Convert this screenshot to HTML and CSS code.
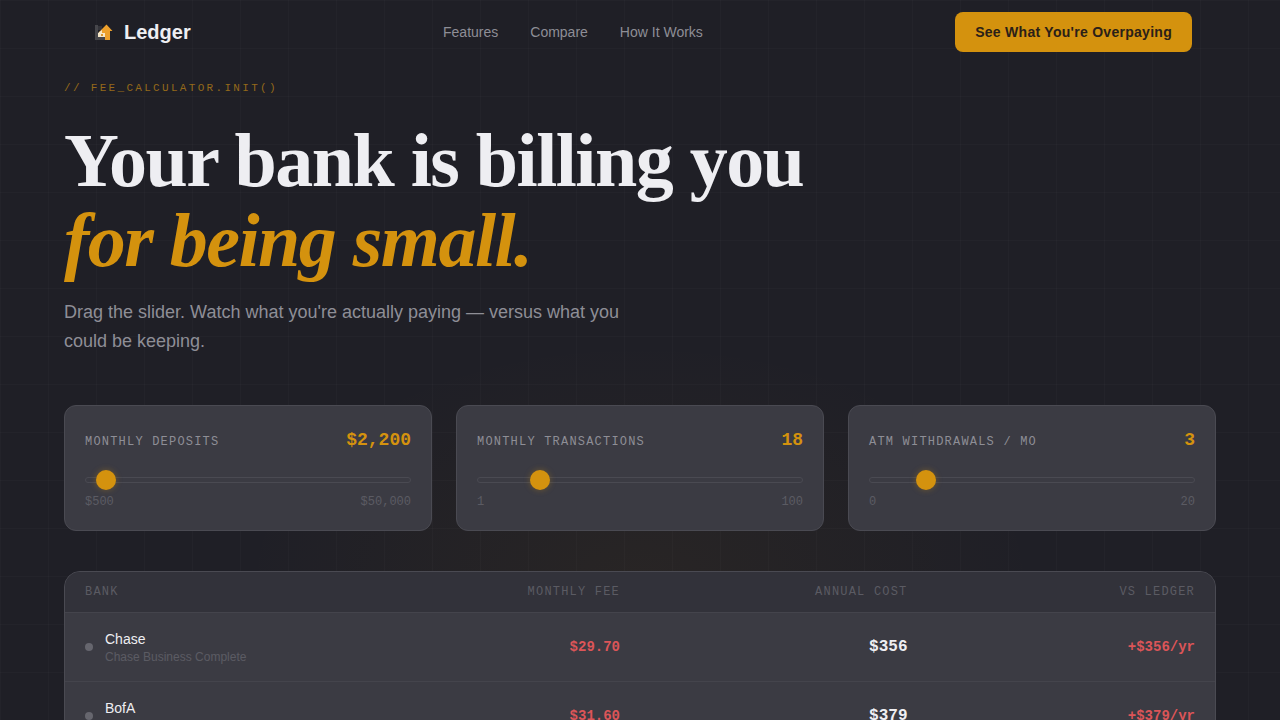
FILE: index.html
```html
<!DOCTYPE html>
<html lang="en">
<head>
    <meta charset="UTF-8">
    <meta name="viewport" content="width=device-width, initial-scale=1.0">
    <title>Ledger</title>
    <link rel="stylesheet" href="styles.css">
</head>
<body>
    <header class="nav">
        <a class="logo" href="#">
            <svg class="logo-icon" viewBox="0 0 28 28" aria-hidden="true">
                <path d="M7 7h3v12h7v3H7z" fill="#46464b"/>
                <path d="M10 8h4v4h-4z" fill="#34343a"/>
                <path d="M18.500 6.500L24.500 13H22v9h-5v-4h-6v-4z" fill="#eda02c"/>
                <path d="M10 15l4-3v3h3v4h-7z" fill="#f5e6c8"/>
                <path d="M13 16h2v2h-2z" fill="#d9962f"/>
            </svg>
            Ledger
        </a>
        <nav class="nav-links">
            <a href="#features">Features</a>
            <a href="#compare">Compare</a>
            <a href="#how">How It Works</a>
        </nav>
        <button class="nav-cta" type="button">See What You're Overpaying</button>
    </header>

    <main class="page">
        <p class="eyebrow">// FEE_CALCULATOR.INIT()</p>
        <h1>Your bank is billing you<br><em>for being small.</em></h1>
        <p class="intro">Drag the slider. Watch what you're actually paying — versus what you could be keeping.</p>

        <form class="sliders">
            <div class="card">
                <div class="card-head">
                    <label for="deposits">MONTHLY DEPOSITS</label>
                    <output for="deposits" id="depositsValue">$2,200</output>
                </div>
                <input type="range" id="deposits" min="500" max="50000" step="100" value="2200">
                <div class="range-ends"><span>$500</span><span>$50,000</span></div>
            </div>
            <div class="card">
                <div class="card-head">
                    <label for="transactions">MONTHLY TRANSACTIONS</label>
                    <output for="transactions" id="transactionsValue">18</output>
                </div>
                <input type="range" id="transactions" min="1" max="100" value="18">
                <div class="range-ends"><span>1</span><span>100</span></div>
            </div>
            <div class="card">
                <div class="card-head">
                    <label for="atm">ATM WITHDRAWALS / MO</label>
                    <output for="atm" id="atmValue">3</output>
                </div>
                <input type="range" id="atm" min="0" max="20" value="3">
                <div class="range-ends"><span>0</span><span>20</span></div>
            </div>
        </form>

        <div class="table-wrap" id="compare">
            <table>
                <thead>
                    <tr>
                        <th>BANK</th>
                        <th>MONTHLY FEE</th>
                        <th>ANNUAL COST</th>
                        <th>VS LEDGER</th>
                    </tr>
                </thead>
                <tbody>
                    <tr>
                        <td>
                            <div class="bank">
                                <span class="dot"></span>
                                <div>
                                    <div class="bank-name">Chase</div>
                                    <div class="bank-plan">Chase Business Complete</div>
                                </div>
                            </div>
                        </td>
                        <td class="fee">$29.70</td>
                        <td class="annual">$356</td>
                        <td class="fee">+$356/yr</td>
                    </tr>
                    <tr>
                        <td>
                            <div class="bank">
                                <span class="dot"></span>
                                <div>
                                    <div class="bank-name">BofA</div>
                                    <div class="bank-plan">Business Advantage</div>
                                </div>
                            </div>
                        </td>
                        <td class="fee">$31.60</td>
                        <td class="annual">$379</td>
                        <td class="fee">+$379/yr</td>
                    </tr>
                </tbody>
            </table>
        </div>
    </main>

    <script>
        // Keep the number beside each slider in step with it
        function bindSlider(id, prefix) {
            const input = document.getElementById(id);
            const value = document.getElementById(id + "Value");
            input.addEventListener("input", function () {
                value.textContent = prefix + Number(input.value).toLocaleString("en-US");
            });
        }

        bindSlider("deposits", "$");
        bindSlider("transactions", "");
        bindSlider("atm", "");
    </script>
</body>
</html>
```

FILE: styles.css
```css
:root {
    --bg: #1f1f26;
    --card: #3b3b43;
    --card-dark: #32323a;
    --border: #4a4a52;
    --amber: #d4920e;
    --text: #eeeef2;
    --muted: #8e8e96;
    --faint: #5b5b63;
    --red: #dc5558;
    --mono: "Liberation Mono", "Courier New", monospace;
}
* {
    box-sizing: border-box;
}
body {
    margin: 0;
    font-family: "Liberation Sans", Arial, sans-serif;
    color: var(--text);
    background-color: var(--bg);
    background-image:
        linear-gradient(rgba(255, 255, 255, 0.02) 1px, transparent 1px),
        linear-gradient(90deg, rgba(255, 255, 255, 0.02) 1px, transparent 1px),
        radial-gradient(ellipse 400px 240px at 50% 580px, rgba(212, 146, 14, 0.05), transparent);
    background-size: 48px 48px, 48px 48px, 100% 100%;
}
h1, p {
    margin: 0;
}

/* Header */
.nav {
    display: flex;
    align-items: center;
    justify-content: space-between;
    height: 64px;
    margin: 0 64px;
    padding: 0 24px;
}
.logo {
    display: flex;
    align-items: center;
    gap: 8px;
    color: var(--text);
    font-size: 20px;
    font-weight: bold;
    text-decoration: none;
}
.logo-icon {
    width: 28px;
    height: 28px;
}
.nav-links {
    display: flex;
    gap: 32px;
}
.nav-links a {
    color: var(--muted);
    font-size: 14px;
    text-decoration: none;
}
.nav-cta {
    height: 40px;
    padding: 0 20px;
    border: none;
    border-radius: 8px;
    background-color: var(--amber);
    color: #2a2018;
    font-family: inherit;
    font-size: 14px;
    font-weight: bold;
    letter-spacing: 0.02em;
    cursor: pointer;
}

/* Hero */
.page {
    padding: 16px 64px 80px;
}
.eyebrow {
    color: #94691a;
    font-family: var(--mono);
    font-size: 11px;
    line-height: 16px;
    letter-spacing: 0.21em;
}
h1 {
    margin-top: 24px;
    font-family: "Liberation Serif", "Times New Roman", serif;
    font-size: 76px;
    line-height: 80px;
    letter-spacing: -0.02em;
}
h1 em {
    color: var(--amber);
}
.intro {
    max-width: 560px;
    margin-top: 18px;
    color: var(--muted);
    font-size: 18px;
    line-height: 29px;
}

/* Sliders */
.sliders {
    display: grid;
    grid-template-columns: repeat(3, 1fr);
    gap: 24px;
    margin-top: 49px;
}
.card {
    padding: 20px;
    border: 1px solid var(--border);
    border-radius: 12px;
    background-color: var(--card);
    font-family: var(--mono);
}
.card-head {
    display: flex;
    align-items: baseline;
    justify-content: space-between;
    line-height: 28px;
}
.card-head label {
    color: var(--muted);
    font-size: 12px;
    letter-spacing: 0.1em;
}
.card-head output {
    color: var(--amber);
    font-size: 18px;
    font-weight: bold;
}
input[type='range'] {
    appearance: none;
    display: block;
    width: 100%;
    height: 6px;
    margin: 21px 0 11px;
    border: 1px solid var(--border);
    border-radius: 3px;
    background-color: var(--card);
    cursor: pointer;
}
input[type='range']::-webkit-slider-thumb {
    appearance: none;
    width: 20px;
    height: 20px;
    border-radius: 50%;
    background-color: var(--amber);
    box-shadow: 0 0 6px rgba(212, 146, 14, 0.35);
}
.range-ends {
    display: flex;
    justify-content: space-between;
    color: var(--faint);
    font-size: 12px;
    line-height: 16px;
}

/* Comparison table */
.table-wrap {
    margin-top: 40px;
    border: 1px solid var(--border);
    border-radius: 16px;
    background-color: var(--card);
    overflow: hidden;
}
table {
    width: 100%;
    table-layout: fixed;
    border-collapse: collapse;
}
th, td {
    padding: 16px 20px;
    text-align: right;
}
th:first-child, td:first-child {
    text-align: left;
}
th {
    padding: 10px 20px;
    background-color: var(--card-dark);
    color: var(--faint);
    font-family: var(--mono);
    font-size: 12px;
    font-weight: normal;
    line-height: 20px;
    letter-spacing: 0.1em;
}
tbody tr {
    border-top: 1px solid #44444c;
}
.bank {
    display: flex;
    align-items: center;
    gap: 12px;
}
.dot {
    width: 8px;
    height: 8px;
    border-radius: 50%;
    background-color: #66666e;
}
.bank-name {
    font-size: 14px;
    line-height: 20px;
}
.bank-plan {
    color: var(--faint);
    font-size: 12px;
    line-height: 16px;
}
.fee, .annual {
    font-family: var(--mono);
    font-weight: bold;
}
.fee {
    color: var(--red);
    font-size: 14px;
}
.annual {
    font-size: 16px;
}
```
